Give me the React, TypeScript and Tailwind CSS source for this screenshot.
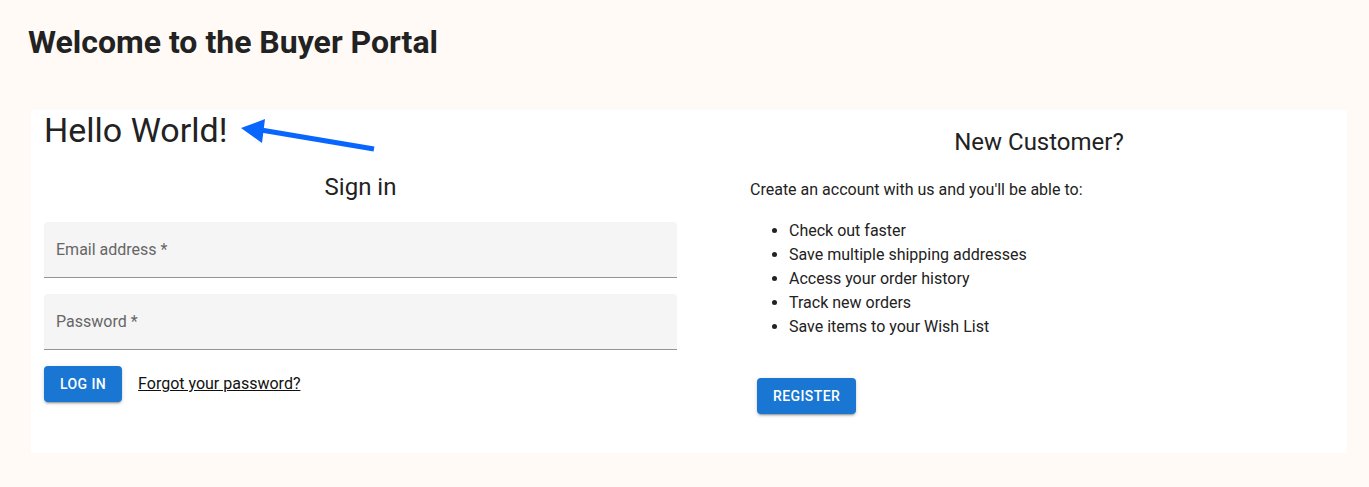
const font = { fontFamily: "Roboto, 'Liberation Sans', sans-serif" };

const features = [
  "Check out faster",
  "Save multiple shipping addresses",
  "Access your order history",
  "Track new orders",
  "Save items to your Wish List",
];

const Field = ({ label }: { label: string }) => (
  <div className="h-[56px] w-full bg-[#f5f5f5] border-b border-[#949494] rounded-t-[4px] flex items-center px-3 text-[16px] text-[#666666]">
    {label}
  </div>
);

const App = () => {
  return (
    <div className="min-h-[487px] bg-[#fffaf6] text-[#1f1f1f]" style={font}>
      <div className="pt-[24px] pl-[28px]">
        <h1 className="text-[32px] font-bold leading-[36px] text-[#222222]">
          Welcome to the Buyer Portal
        </h1>
      </div>

      <div className="relative mt-[50px] ml-[31px] mr-[22px] bg-white pl-[13px] pr-[13px] pt-[1px] pb-[39px]">
        <h2 className="text-[34px] leading-[40px] text-[#222222] -mt-[1px]">Hello World!</h2>

        <svg
          className="absolute left-[200px] top-[5px]"
          width="190"
          height="50"
          viewBox="200 5 190 50"
        >
          <line x1="374" y1="149" x2="255" y2="129" stroke="#0866ff" strokeWidth="5" transform="translate(-31 -110)" />
          <polygon points="241,128 265,119 262,143" fill="#0866ff" transform="translate(-31 -110)" />
        </svg>

        <div className="flex items-start">
          <div className="w-[633px] shrink-0 pb-[12px]">
            <h3 className="text-center text-[24px] leading-[28px] mt-[23px] text-[#222222]">Sign in</h3>
            <div className="mt-[21px] flex flex-col gap-4">
              <Field label="Email address *" />
              <Field label="Password *" />
            </div>
            <div className="mt-4 flex items-center gap-4">
              <button className="h-[36px] px-4 rounded-[4px] bg-[#1976d2] text-white text-[14px] font-medium tracking-[0.4px] uppercase shadow-[0_3px_1px_-2px_rgba(0,0,0,0.2),0_2px_2px_0_rgba(0,0,0,0.14),0_1px_5px_0_rgba(0,0,0,0.12)]">
                Log in
              </button>
              <a className="text-[16px] underline text-[#111111]">Forgot your password?</a>
            </div>
          </div>

          <div className="flex-1 ml-[67px] -mt-[22px]">
            <h3 className="text-center text-[24px] leading-[28px] text-[#222222]">New Customer?</h3>
            <p className="mt-[24px] pl-[6px] text-[16px] leading-[20px] text-[#222222]">
              Create an account with us and you'll be able to:
            </p>
            <ul className="mt-[19px] pl-[45px] list-disc text-[16px] leading-[24px] text-[#222222]">
              {features.map((f) => (
                <li key={f}>{f}</li>
              ))}
            </ul>
            <button className="block mt-[39px] ml-[13px] h-[36px] px-4 rounded-[4px] bg-[#1976d2] text-white text-[14px] font-medium tracking-[0.4px] uppercase shadow-[0_3px_1px_-2px_rgba(0,0,0,0.2),0_2px_2px_0_rgba(0,0,0,0.14),0_1px_5px_0_rgba(0,0,0,0.12)]">
              Register
            </button>
          </div>
        </div>
      </div>
    </div>
  );
};

export default App;
